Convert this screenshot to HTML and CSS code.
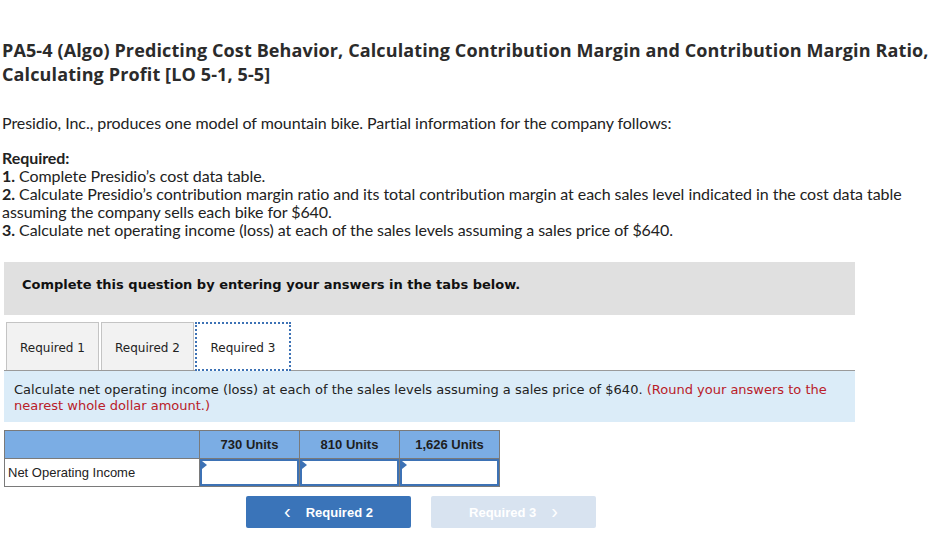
FILE: index.html
```html
<!DOCTYPE html>
<html>
<head>
<meta charset="utf-8">
<link rel="stylesheet" href="styles.css">
</head>
<body>
<div class="page">
  <h1 class="title">PA5-4 (Algo) Predicting Cost Behavior, Calculating Contribution Margin and Contribution Margin Ratio, Calculating Profit [LO 5-1, 5-5]</h1>
  <p class="intro">Presidio, Inc., produces one model of mountain bike. Partial information for the company follows:</p>
  <div class="required">
    <div class="req-head">Required:</div>
    <div><b>1.</b> Complete Presidio’s cost data table.</div>
    <div><b>2.</b> Calculate Presidio’s contribution margin ratio and its total contribution margin at each sales level indicated in the cost data table assuming the company sells each bike for $640.</div>
    <div><b>3.</b> Calculate net operating income (loss) at each of the sales levels assuming a sales price of $640.</div>
  </div>

  <div class="instruct">Complete this question by entering your answers in the tabs below.</div>

  <div class="tabs">
    <div class="tab">Required 1</div>
    <div class="tab">Required 2</div>
    <div class="tab active">Required 3</div>
  </div>

  <div class="info">Calculate net operating income (loss) at each of the sales levels assuming a sales price of $640. <span class="red">(Round your answers to the nearest whole dollar amount.)</span></div>

  <table class="grid">
    <tr class="head">
      <th class="label"></th>
      <th>730 Units</th>
      <th>810 Units</th>
      <th>1,626 Units</th>
    </tr>
    <tr>
      <td class="label">Net Operating Income</td>
      <td class="in"><div class="box"></div></td>
      <td class="in"><div class="box"></div></td>
      <td class="in"><div class="box"></div></td>
    </tr>
  </table>

  <div class="nav">
    <div class="btn prev"><span class="chev">&lsaquo;</span>Required 2</div>
    <div class="btn next disabled">Required 3<span class="chev">&rsaquo;</span></div>
  </div>
</div>
</body>
</html>
```

FILE: styles.css
```css
html, body {
  margin: 0;
  padding: 0;
  background: #fff;
}
body {
  font-family: "Lato", "Open Sans", sans-serif;
  color: #222;
}
.page {
  width: 932px;
  padding-left: 2px;
  box-sizing: border-box;
}
.title {
  margin: 38px 0 0 0;
  font-family: "Open Sans", sans-serif;
  font-size: 18px;
  line-height: 24px;
  font-weight: 700;
  letter-spacing: 0.12px;
  color: #2b2b2b;
}
.intro {
  margin: 28px 0 0 0;
  font-size: 16px;
  line-height: 18px;
  letter-spacing: -0.06px;
}
.required {
  margin-top: 17px;
  font-size: 16px;
  line-height: 18px;
  letter-spacing: -0.06px;
}
.req-head {
  font-weight: 700;
}
.required b {
  font-weight: 700;
}
.instruct {
  margin: 23px 0 0 2px;
  width: 851px;
  height: 53px;
  box-sizing: border-box;
  background: #e0e0e0;
  padding: 0 0 8px 18px;
  display: flex;
  align-items: center;
  font-family: "DejaVu Sans", Verdana, sans-serif;
  font-size: 13px;
  font-weight: 700;
  color: #111;
}
.tabs {
  margin: 7px 0 0 2px;
  width: 851px;
  border-bottom: 1px solid #9a9a9a;
  display: flex;
  gap: 2px;
  padding-left: 2px;
  box-sizing: border-box;
  height: 49px;
}
.tab {
  width: 93px;
  height: 48px;
  box-sizing: border-box;
  background: #f2f2f2;
  border: 1px solid #c4c4c4;
  border-bottom: none;
  display: flex;
  align-items: center;
  justify-content: center;
  padding-top: 2px;
  font-family: "DejaVu Sans", Verdana, sans-serif;
  font-size: 12px;
  color: #222;
}
.tab.active {
  width: 96px;
  margin-left: -1px;
  background: #fff;
  border: 2px dotted #3d72b5;
  height: 49px;
  position: relative;
  z-index: 1;
}
.info {
  margin-left: 2px;
  width: 851px;
  box-sizing: border-box;
  background: #dbecf8;
  padding: 11px 12px 8px 10px;
  font-family: "DejaVu Sans", Verdana, sans-serif;
  font-size: 13px;
  line-height: 16px;
  color: #222;
}
.red {
  color: #b92029;
}
.grid {
  margin: 8px 0 0 2px;
  border-collapse: collapse;
  font-family: "Liberation Sans", Arial, sans-serif;
  font-size: 13px;
  color: #222;
}
.grid th, .grid td {
  border: 1px solid #7a7a7a;
  padding: 0;
  height: 27px;
}
.grid th {
  background: #7badE4;
  font-weight: 700;
  width: 99px;
  text-align: center;
  color: #1e1e1e;
}
.grid th.label {
  width: 194px;
}
.grid td.label {
  padding-left: 3px;
  text-align: left;
  background: #fff;
}
.grid td.in {
  position: relative;
  background: #fff;
}
.box {
  height: 27px;
  box-sizing: border-box;
  border: 2px solid #3d72b5;
  position: relative;
}
.box::before {
  content: "";
  position: absolute;
  left: 0;
  top: 0;
  border-top: 4px solid transparent;
  border-bottom: 4px solid transparent;
  border-left: 5px solid #3d72b5;
}
.nav {
  margin-top: 9px;
  display: flex;
  gap: 20px;
  padding-left: 244px;
}
.btn {
  width: 165px;
  height: 32px;
  border-radius: 2px;
  display: flex;
  align-items: center;
  justify-content: center;
  font-family: "Liberation Sans", Arial, sans-serif;
  font-size: 13px;
  font-weight: 700;
  color: #fff;
}
.btn.prev {
  background: #3a74b9;
}
.btn.disabled {
  background: #d8e3f0;
}
.chev {
  font-size: 20px;
  font-weight: 400;
  line-height: 1;
  margin-top: -3px;
}
.prev .chev {
  margin-right: 15px;
}
.next .chev {
  margin-left: 15px;
}
```
